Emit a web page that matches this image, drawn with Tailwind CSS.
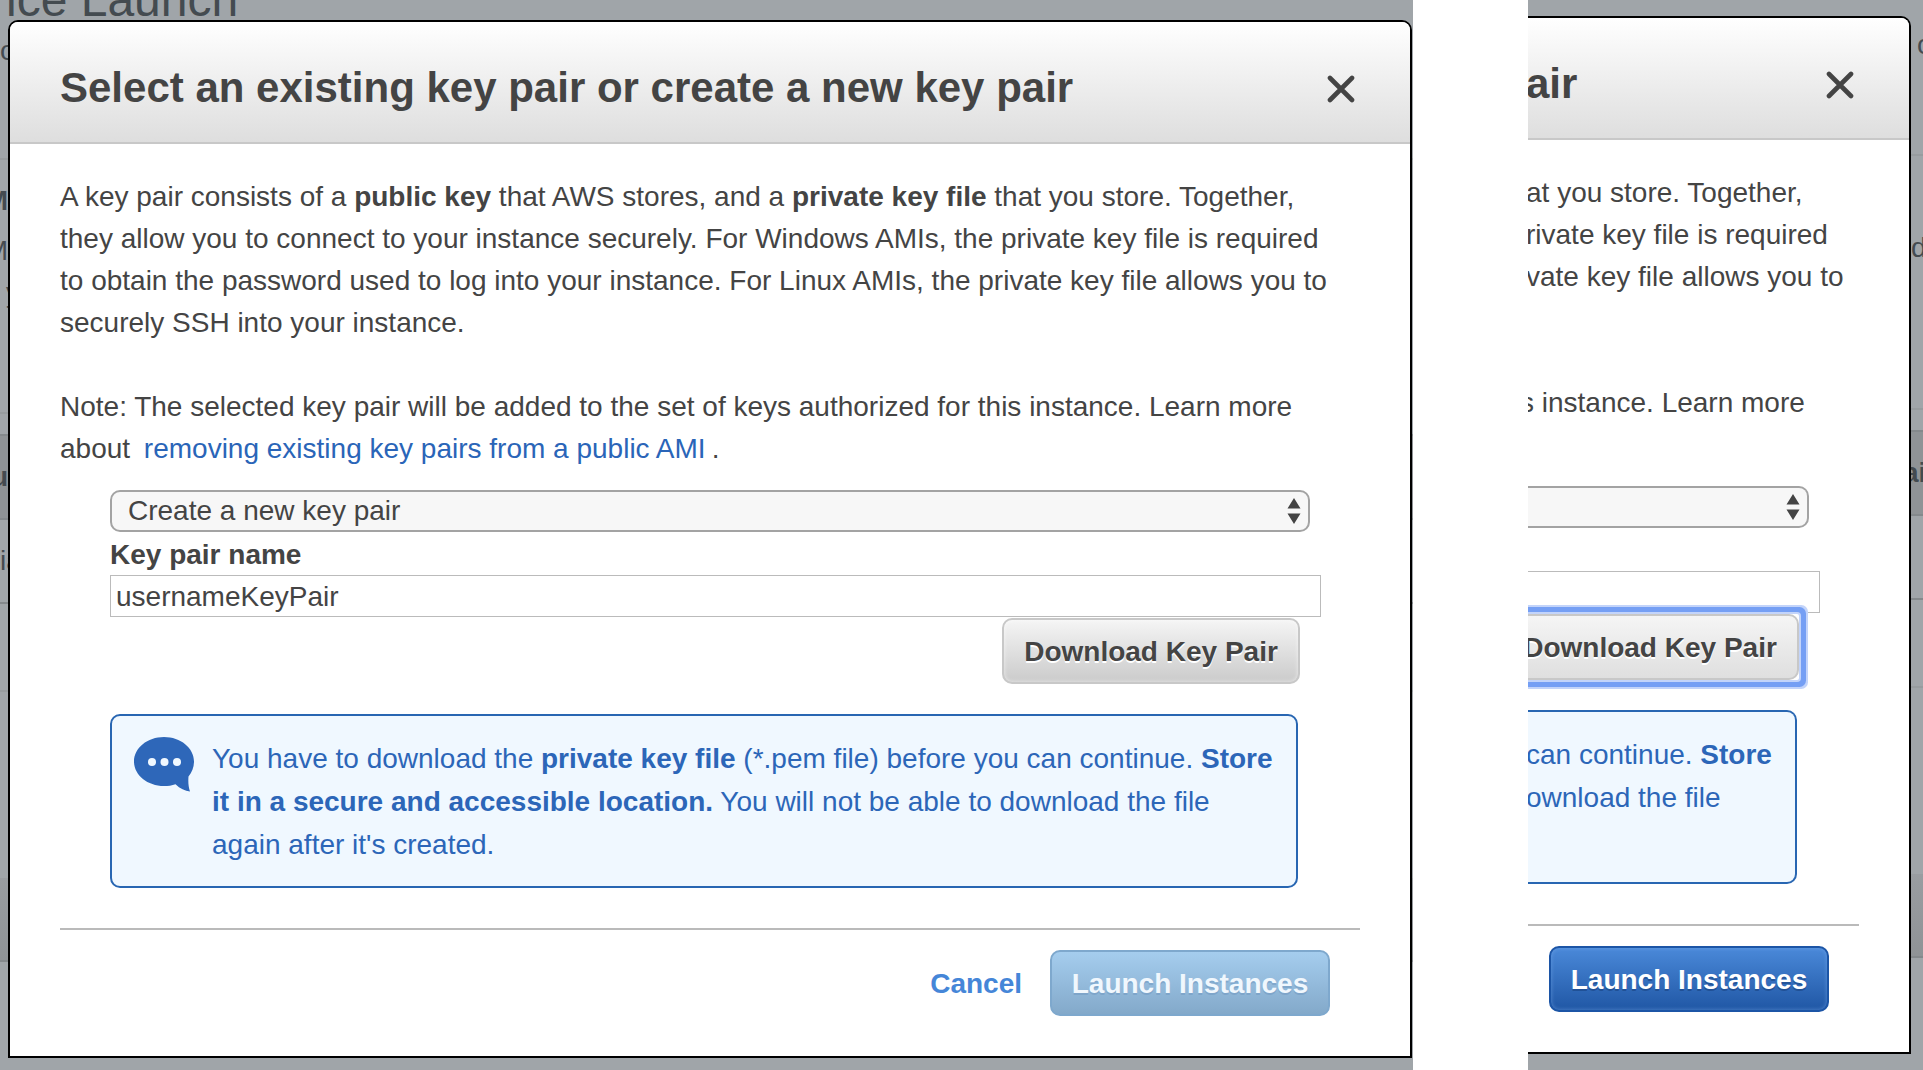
<!DOCTYPE html>
<html lang="en">
<head>
<meta charset="utf-8">
<title>Select an existing key pair or create a new key pair</title>
<script src="https://cdn.jsdelivr.net/npm/@tailwindcss/browser@4"></script>
</head>
<body class="bg-white text-[28px] leading-[42px] text-[#444] font-['Liberation_Sans',Arial,sans-serif]">
<main class="grid min-h-screen grid-cols-[1413fr_115fr_395fr]">

  <!-- Step 1: key pair not downloaded yet -->
  <section class="relative overflow-hidden bg-[#a0a5a9] pt-5 pr-px pl-2">
    <!-- Dimmed launch wizard behind the dialog -->
    <div class="absolute inset-0 flex flex-col whitespace-nowrap text-[#444b50]">
      <div class="h-[160px] border-b-2 border-[#979c9f]">
        <div class="-mt-6 pl-1.5 text-[48px] leading-[48px]">ice Launch</div>
        <div class="mt-1.5">o</div>
      </div>
      <div class="flex h-[254px] w-2 flex-col items-end border-b-2 border-[#979c9f] pt-5">
        <b>M</b>
        <span class="mt-2">M</span>
        <span class="-mr-3">y</span>
      </div>
      <div class="h-5"></div>
      <div class="h-[86px] border-y-2 border-[#84898c] bg-[#8f9396] pt-5"><b class="flex w-2 justify-end">u</b></div>
      <div class="h-[84px] border-b-2 border-[#84898c] pt-5">ia</div>
      <div class="h-[88px] border-b-2 border-[#979c9f]"></div>
      <div class="h-[186px]"></div>
      <div class="h-[84px] border-b-2 border-[#84898c] bg-linear-to-b from-[#999da1] to-[#8f9396]"></div>
    </div>

    <div role="dialog" aria-labelledby="title-1" class="relative rounded-t-[10px] border-2 border-black bg-white pb-10">
      <header class="flex h-[122px] items-center justify-between rounded-t-lg border-b-2 border-[#c8c8c8] bg-linear-to-b from-white to-[#dedede] pt-3 pr-[50px] pl-[50px]">
        <h1 id="title-1" class="text-[42px] leading-[50px] font-bold whitespace-nowrap">Select an existing key pair or create a new key pair</h1>
        <button type="button" aria-label="Close" class="mr-[5px] pt-0.5">
          <svg class="size-7" viewBox="0 0 28 28" fill="none" stroke="#444" stroke-width="4.6" stroke-linecap="round"><path d="M3 3L25 25M25 3L3 25"/></svg>
        </button>
      </header>
      <div class="px-[50px] pt-8">
        <p class="whitespace-nowrap">A key pair consists of a <b>public key</b> that AWS stores, and a <b>private key file</b> that you store. Together,<br>they allow you to connect to your instance securely. For Windows AMIs, the private key file is required<br>to obtain the password used to log into your instance. For Linux AMIs, the private key file allows you to<br>securely SSH into your instance.</p>
        <p class="mt-[42px] whitespace-nowrap">Note: The selected key pair will be added to the set of keys authorized for this instance. Learn more<br>about <a href="#" class="mx-1.5 text-[#2a65b8]">removing existing key pairs from a public AMI</a>.</p>
        <form class="flex flex-col pt-5 pl-[50px]">
          <div class="relative mr-[50px]">
            <select aria-label="Key pair option" class="block h-[42px] w-full appearance-none rounded-[10px] border-2 border-[#a3a3a3] bg-[#f7f7f7] pl-4 leading-[38px]"><option>Create a new key pair</option></select>
            <svg class="pointer-events-none absolute top-2 right-[9px] h-[26px] w-3.5" viewBox="0 0 14 26" fill="#444"><path d="M7 0L13.500 10.500H.5zM7 26L13.500 15.500H.5z"/></svg>
          </div>
          <label for="name-1" class="h-[43px] pt-0.5 font-bold">Key pair name</label>
          <input id="name-1" type="text" value="usernameKeyPair" class="mr-[39px] h-[42px] border border-[#bbb] bg-white px-[5px] pt-0.5 outline-none">
          <button type="button" class="mt-px mr-[60px] h-[66px] w-[298px] self-end rounded-[10px] border-2 border-[#c8c8c8] bg-linear-to-b from-[#f5f5f5] to-[#cbcbcb] pt-0.5 font-bold shadow-[inset_0_0_4px_rgba(255,255,255,0.6)] text-shadow-[0_2px_0_#fff]">Download Key Pair</button>
        </form>
        <div class="mt-[30px] mr-[62px] ml-[50px] flex h-[174px] gap-[18px] rounded-[10px] border-2 border-[#2866b2] bg-[#f0f8ff] pt-[21px] pl-[22px] text-[#2c66b8]">
          <svg class="h-14 w-[60px] shrink-0" viewBox="0 0 60 56"><path fill="#2e67b9" d="M30 0C13.400 0 0 11 0 24.500S13.400 49 30 49C34 49 38 48.500 41.500 47.200C46 51.500 51 54 56 54.500C54.500 50 54 45 54.500 39.500C58 35.500 60 30 60 24.500C60 11 46.600 0 30 0Z"/><g fill="#f0f8ff"><circle cx="18" cy="25" r="4"/><circle cx="30.500" cy="25" r="4"/><circle cx="43" cy="25" r="4"/></g></svg>
          <p class="leading-[43px] whitespace-nowrap">You have to download the <b>private key file</b> (*.pem file) before you can continue. <b>Store</b><br><b>it in a secure and accessible location.</b> You will not be able to download the file<br>again after it's created.</p>
        </div>
        <footer class="mt-10 flex items-center justify-end gap-7 border-t-2 border-[#bababa] pt-5 pr-[30px]">
          <button type="button" class="pt-0.5 font-bold text-[#4586d8]">Cancel</button>
          <button type="button" disabled class="h-[66px] w-[280px] rounded-[10px] border-2 border-[#7ea8cd] bg-linear-to-b from-[#a5cdee] to-[#83a9ca] pt-0.5 font-bold text-[#f0f7fd] text-shadow-[0_2px_0_rgba(110,150,190,0.5)]">Launch Instances</button>
        </footer>
      </div>
    </div>
  </section>

  <div></div>

  <!-- Step 2: key pair downloaded, launch enabled -->
  <section class="relative overflow-hidden bg-[#a0a5a9] pt-4 pr-3">
    <div class="absolute inset-y-0 right-0 flex w-3 flex-col whitespace-nowrap text-[#444b50]">
      <div class="h-[156px] border-b-2 border-[#979c9f] pt-6 pl-1.5">c</div>
      <div class="h-[254px] border-b-2 border-[#979c9f] pt-[71px]">d</div>
      <div class="h-5"></div>
      <div class="h-[86px] border-y-2 border-[#84898c] bg-[#8f9396] pt-5"><b class="-ml-2">ai</b></div>
      <div class="h-[84px] border-b-2 border-[#84898c]"></div>
      <div class="h-[88px] border-b-2 border-[#979c9f]"></div>
      <div class="h-[186px]"></div>
      <div class="h-[84px] border-b-2 border-[#84898c] bg-linear-to-b from-[#999da1] to-[#8f9396]"></div>
    </div>

    <div role="dialog" aria-labelledby="title-2" class="relative rounded-tr-[10px] border-2 border-l-0 border-black bg-white pb-10">
      <header class="flex h-[122px] items-center justify-between rounded-tr-lg border-b-2 border-[#c8c8c8] bg-linear-to-b from-white to-[#dedede] pt-3 pr-[50px]">
        <h2 id="title-2" class="-ml-0.5 text-[42px] leading-[50px] font-bold">air</h2>
        <button type="button" aria-label="Close" class="mr-[5px] pt-0.5">
          <svg class="size-7" viewBox="0 0 28 28" fill="none" stroke="#444" stroke-width="4.6" stroke-linecap="round"><path d="M3 3L25 25M25 3L3 25"/></svg>
        </button>
      </header>
      <div class="pt-8">
        <p class="-ml-0.5 h-[168px] whitespace-nowrap">at you store. Together,<br>rivate key file is required<br>vate key file allows you to</p>
        <p class="mt-[42px] -ml-2 h-[84px] whitespace-nowrap">s instance. Learn more</p>
        <form class="flex flex-col pt-5">
          <div class="relative mr-[100px]">
            <select aria-label="Key pair option" class="block h-[42px] w-full appearance-none rounded-r-[10px] border-2 border-l-0 border-[#a3a3a3] bg-[#f7f7f7]"><option></option></select>
            <svg class="pointer-events-none absolute top-2 right-[9px] h-[26px] w-3.5" viewBox="0 0 14 26" fill="#444"><path d="M7 0L13.500 10.500H.5zM7 26L13.500 15.500H.5z"/></svg>
          </div>
          <input type="text" aria-label="Key pair name" class="mt-[43px] mr-[89px] h-[42px] border border-l-0 border-[#bbb] bg-white px-1 outline-none">
          <!-- Focus ring keeps square corners around the rounded button -->
          <div class="relative mt-px mr-[110px] self-end rounded-[2px] bg-white shadow-[0_0_0_2px_#c3d4fa,0_0_0_7px_#759ff4,0_0_0_9px_#c3d4fa]">
            <button type="button" class="block h-[66px] w-[298px] rounded-[10px] border-2 border-[#c8c8c8] bg-linear-to-b from-[#f5f5f5] to-[#dfdfdf] pt-0.5 font-bold outline-none text-shadow-[0_2px_0_#fff]">Download Key Pair</button>
          </div>
        </form>
        <div class="mt-[30px] mr-[112px] h-[174px] rounded-r-[10px] border-2 border-l-0 border-[#2866b2] bg-[#f0f8ff] pt-[21px] text-[#2c66b8]">
          <p class="-ml-0.5 leading-[43px] whitespace-nowrap">can continue. <b>Store</b><br>ownload the file</p>
        </div>
        <footer class="mt-10 mr-[50px] flex justify-end border-t-2 border-[#bababa] pt-5 pr-[30px]">
          <button type="button" class="h-[66px] w-[280px] rounded-[10px] border-2 border-[#1c55a6] bg-linear-to-b from-[#4a89d9] to-[#2057a5] pt-0.5 font-bold text-white shadow-[inset_0_0_4px_rgba(120,170,235,0.6)] text-shadow-[0_2px_0_rgba(20,60,120,0.5)]">Launch Instances</button>
        </footer>
      </div>
    </div>
  </section>
</main>
</body>
</html>
